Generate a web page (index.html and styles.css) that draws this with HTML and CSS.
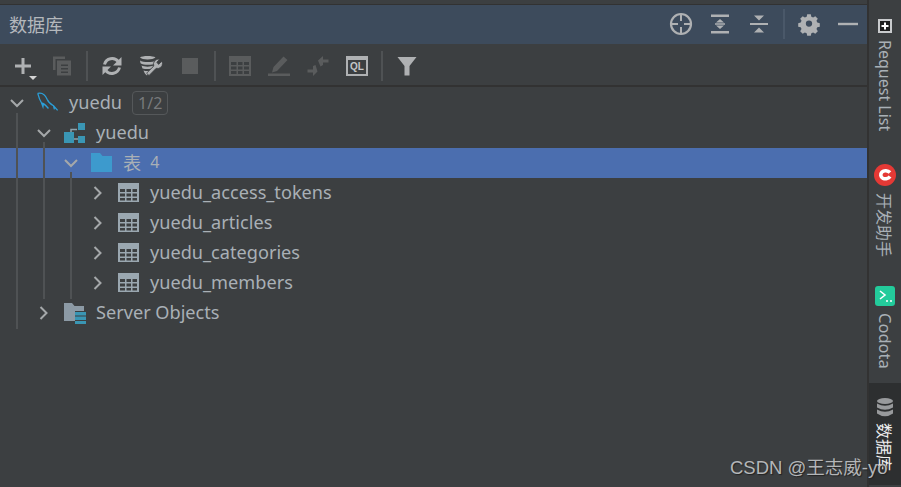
FILE: index.html
```html
<!DOCTYPE html>
<html lang="zh">
<head>
<meta charset="utf-8">
<title>数据库</title>
<link rel="stylesheet" href="styles.css">
</head>
<body>
<div class="app">
  <main class="panel">
    <div class="topstrip"></div>
    <header class="titlebar">
      <span class="title">数据库</span>
      <div class="titleicons">
        <svg class="ic" viewBox="0 0 24 24"><circle cx="12" cy="12" r="10" fill="none" stroke="#afb1b3" stroke-width="2.200"/><path d="M12 2v7M12 15v7M2 12h7M15 12h7" stroke="#afb1b3" stroke-width="2"/></svg>
        <svg class="ic" viewBox="0 0 24 24"><path d="M3 2.500h18v2.500H3zM3 19h18v2.500H3zM12 7l4 3.600H8zM12 17l-4-3.600h8zM7 11.200h10v1.600H7z" fill="#afb1b3"/></svg>
        <svg class="ic" viewBox="0 0 24 24"><path d="M3 11h18v2H3zM7 3.500h10l-5 5zM12 15.500l5 5H7z" fill="#afb1b3"/></svg>
        <span class="vsep dark"></span>
        <svg class="ic" viewBox="0 0 24 24"><path fill="#afb1b3" fill-rule="evenodd" d="M10 1.500h4l.6 2.800 2 .9 2.400-1.500 2.800 2.800-1.500 2.400.9 2 2.800.6v4l-2.800.6-.9 2 1.500 2.400-2.800 2.800-2.400-1.500-2 .9-.6 2.800h-4l-.6-2.800-2-.9-2.400 1.500-2.800-2.800 1.500-2.400-.9-2-2.800-.6v-4l2.800-.6.9-2-1.500-2.400 2.800-2.800 2.400 1.500 2-.9zM12 8.500a3.500 3.500 0 1 0 0 7 3.500 3.500 0 0 0 0-7z" transform="translate(1.200 .8) scale(.9)"/></svg>
        <svg class="ic" viewBox="0 0 24 24"><path d="M2 10.800h20v2.400H2z" fill="#afb1b3"/></svg>
      </div>
    </header>
    <nav class="toolbar">
      <span class="tool add">
        <svg viewBox="0 0 22 22"><path d="M9.500 3h3v6.500H19v3h-6.500V19h-3v-6.500H3v-3h6.500z" fill="#afb1b3"/></svg>
        <i class="caret"></i>
      </span>
      <svg class="tool" viewBox="0 0 22 22"><path d="M2 1.500h12v2.500H4.500V15H2z" fill="#5a5c5d"/><path fill="#5a5c5d" fill-rule="evenodd" d="M6 5.500h14v15H6zM10 9.500V11h7V9.500zm0 3.500v1.500h7V13zm0 3.500V18h7v-1.500z"/></svg>
      <span class="vsep"></span>
      <svg class="tool" viewBox="0 0 22 22"><path d="M3.500 9.500a7.800 7.800 0 0 1 13.800-2.800" fill="none" stroke="#afb1b3" stroke-width="3"/><path d="M20.500 2v8.500H12z" fill="#afb1b3"/><path d="M18.500 12.500a7.800 7.800 0 0 1-13.800 2.800" fill="none" stroke="#afb1b3" stroke-width="3"/><path d="M1.500 20v-8.500H10z" fill="#afb1b3"/></svg>
      <svg class="tool wide" viewBox="0 0 24 22"><path d="M1 2.500C3 .5 14 .5 16.500 2.500 14 5 3 5 1 2.500zM1 5.500c3 2 13 2 16 0l-.5 2.800c-3 2-12 2-15 0zM2.500 10.500c3 1.500 9 1.500 12 0l-2 3c-2.500.8-6 .8-9 0zM4.500 15.500c2 .7 4 .8 6 .3L8 20.500c-1-.3-3-3-3.500-5z" fill="#afb1b3"/><path d="M23.500 8.500a5 5 0 0 1-6.300 4.800L10 20.500 7.600 18.200l7.200-7.200A5 5 0 0 1 20.700 4.300L17.800 7.200l1.800 2.200 2.900-2.900c.6.600 1 1.300 1 2z" fill="#afb1b3" stroke="#3c3f41" stroke-width=".8"/></svg>
      <svg class="tool" viewBox="0 0 22 22"><rect x="3" y="3" width="16" height="16" fill="#5a5c5d"/></svg>
      <span class="vsep"></span>
      <svg class="tool" viewBox="0 0 22 22"><path fill="#5a5c5d" fill-rule="evenodd" d="M0 1h22v20H0zM2 7v3h5.500V7zm7 0v3h4.500V7zm6 0v3h5V7zM2 11.500v3h5.500v-3zm7 0v3h4.500v-3zm6 0v3h5v-3zM2 16v3h5.500v-3zm7 0v3h4.500v-3zm6 0v3h5v-3z"/></svg>
      <svg class="tool" viewBox="0 0 22 22"><path d="M15.500 1.500l4 3.500L9 16l-5 1.500L5.500 12zM0 18.500h22V21H0z" fill="#5a5c5d"/></svg>
      <svg class="tool" viewBox="0 0 22 22"><path d="M11 5.500L16 1v3.500h5.500v3H16V10l-2.500 1.500zM10.500 16.500L6 21v-3.500H.5v-3H6V11l2.500-1z" fill="#5a5c5d"/></svg>
      <span class="tool ql"><b>QL</b></span>
      <span class="vsep"></span>
      <svg class="tool" viewBox="0 0 22 22"><path d="M1.500 2h19L13.500 11v9.500h-5V11z" fill="#afb1b3"/></svg>
    </nav>
    <div class="tree">
      <i class="guide g0"></i>
      <i class="guide g1"></i>
      <i class="guide g2"></i>

      <div class="row">
        <svg class="chev" viewBox="0 0 14 14"><path d="M1 4l6 6 6-6" class="cp"/></svg>
        <svg class="nodeicon" viewBox="0 0 24 24"><path d="M.8 1.500C5 .5 9 3 11 8c1.500 3.500 4 5.500 7 7l4.500 5M.8 1.500C2 6 3 9 5 12l1.500 4 .5-3M5 12c3 .5 5 3 7.500 6M18 15l1 4" fill="none" stroke="#2b9fd8" stroke-width="1.400"/></svg>
        <span class="name">yuedu</span>
        <span class="badge">1/2</span>
      </div>

      <div class="row l1">
        <svg class="chev" viewBox="0 0 14 14"><path d="M1 4l6 6 6-6" class="cp"/></svg>
        <svg class="nodeicon" viewBox="0 0 22 22"><path d="M7 14V7.500h6" fill="none" stroke="#8fa3ad" stroke-width="1.500"/><path d="M14 1h7v7h-7zM0 10h10v11H0zM14 14h7v7h-7z" fill="#3a96b4"/><path d="M10 17h4" stroke="#8fa3ad" stroke-width="1.500"/></svg>
        <span class="name">yuedu</span>
      </div>

      <div class="row l2 selected">
        <svg class="chev" viewBox="0 0 14 14"><path d="M1 4l6 6 6-6" class="cp"/></svg>
        <svg class="nodeicon" viewBox="0 0 22 22"><path d="M0 1h9l2.500 3H21v16H0z" fill="#3d9acd"/></svg>
        <span class="name">表</span>
        <span class="count">4</span>
      </div>

      <div class="row l3">
        <svg class="chev" viewBox="0 0 14 14"><path d="M3.500 1l6 6-6 6" class="cp"/></svg>
        <svg class="nodeicon" viewBox="0 0 22 22"><use href="#tbl"/></svg>
        <span class="name">yuedu_access_tokens</span>
      </div>
      <div class="row l3">
        <svg class="chev" viewBox="0 0 14 14"><path d="M3.500 1l6 6-6 6" class="cp"/></svg>
        <svg class="nodeicon" viewBox="0 0 22 22"><use href="#tbl"/></svg>
        <span class="name">yuedu_articles</span>
      </div>
      <div class="row l3">
        <svg class="chev" viewBox="0 0 14 14"><path d="M3.500 1l6 6-6 6" class="cp"/></svg>
        <svg class="nodeicon" viewBox="0 0 22 22"><use href="#tbl"/></svg>
        <span class="name">yuedu_categories</span>
      </div>
      <div class="row l3">
        <svg class="chev" viewBox="0 0 14 14"><path d="M3.500 1l6 6-6 6" class="cp"/></svg>
        <svg class="nodeicon" viewBox="0 0 22 22"><use href="#tbl"/></svg>
        <span class="name">yuedu_members</span>
      </div>

      <div class="row l1">
        <svg class="chev" viewBox="0 0 14 14"><path d="M3.500 1l6 6-6 6" class="cp"/></svg>
        <svg class="nodeicon" viewBox="0 0 22 22"><path d="M0 1h8l2.500 3H20v5h-9v10H0z" fill="#8c9aa5"/><path d="M11 10h11v3.500H11zM11 14.500h11V18H11zM11 19h11v3H11z" fill="#3a96b4"/></svg>
        <span class="name">Server Objects</span>
      </div>
    </div>
  </main>

  <aside class="sidebar">
    <div class="stab t-req">
      <span class="sq"><svg viewBox="0 0 14 14"><rect width="14" height="14" fill="#c9cbcd"/><rect x="2" y="2" width="10" height="10" fill="#1e1e1e"/><path d="M6 3.500h2V6h2.500v2H8v2.500H6V8H3.500V6H6z" fill="#fff"/></svg></span>
      <span class="vtext">Request List</span>
    </div>
    <div class="stab t-dev">
      <span class="sq big"><svg viewBox="0 0 22 22"><circle cx="11" cy="11" r="11" fill="#e53935"/><path d="M16 8.500C14 6.500 10 6 8 8c-2 2-1.500 5 1 6.300 2.500 1 5.500.4 7-1.800" fill="none" stroke="#fff" stroke-width="3.600"/></svg></span>
      <span class="vtext">开发助手</span>
    </div>
    <div class="stab t-cod">
      <span class="sq big cod"><svg viewBox="0 0 20 20"><rect width="20" height="20" rx="3" fill="#23cb9b"/><path d="M5 5l5 4-5 4" fill="none" stroke="#fff" stroke-width="1.600"/><path d="M11 15h2M15 15h2" stroke="#fff" stroke-width="1.600"/></svg></span>
      <span class="vtext">Codota</span>
    </div>
    <div class="stab t-db">
      <span class="sq cyl"><svg viewBox="0 0 16 19"><ellipse cx="8" cy="3" rx="8" ry="3" fill="#989a9c"/><path d="M0 5.500Q8 10 16 5.500V9.500Q8 14 0 9.500zM0 11.500Q8 16 16 11.500V15.500Q8 21 0 15.500z" fill="#989a9c"/></svg></span>
      <span class="vtext">数据库</span>
    </div>
  </aside>
</div>
<div class="watermark">CSDN @王志威-yo</div>
<svg class="defs" aria-hidden="true"><defs><g id="tbl"><path fill="#9aa7b0" fill-rule="evenodd" d="M0 1h21v19H0zM2 7v3h5v-3zm6.500 0v3h4.500v-3zm6 0v3H19v-3zM2 11.500v3h5v-3zm6.500 0v3h4.500v-3zm6 0v3H19v-3zM2 16v2.500h5V16zm6.500 0v2.500h4.500V16zm6 0v2.500H19V16z"/></g></defs></svg>
</body>
</html>
```

FILE: styles.css
```css
* { box-sizing: border-box; }
html, body { margin: 0; height: 100%; overflow: hidden; }
body {
  position: relative;
  background: #3c3f41;
  color: #bbbbbb;
  font-family: "Noto Sans", "Noto Sans CJK SC", sans-serif;
}
.app { display: flex; height: 487px; width: 901px; }
.panel { flex: 1; display: flex; flex-direction: column; min-width: 0; }
.topstrip { height: 5px; background: #3c3f41; border-bottom: 1px solid #323232; }
.titlebar {
  height: 39px;
  background: #3d4b5c;
  display: flex;
  align-items: center;
  justify-content: space-between;
  padding-left: 9px;
}
.title { font-size: 18px; color: #b4b8bc; font-family: "Noto Sans CJK SC", sans-serif; padding-bottom: 2px; }
.titleicons { display: flex; align-items: center; gap: 15px; padding-right: 7px; padding-bottom: 1px; }
.ic { width: 24px; height: 24px; display: block; flex: none; }
.vsep { width: 2px; height: 30px; background: #4f5254; display: block; flex: none; margin: 0 -4px; }
.vsep.dark { background: #4a5869; margin: 0 -3px; }
.toolbar {
  height: 43px;
  display: flex;
  align-items: center;
  padding: 2px 0 0 12px;
  gap: 17px;
  border-bottom: 2px solid #323232;
  background: #3c3f41;
}
.tool { width: 22px; height: 22px; display: block; flex: none; }
.tool.wide { width: 24px; margin: 0 -1px; }
.add { position: relative; }
.add svg { width: 22px; height: 22px; display: block; }
.caret {
  position: absolute;
  right: -3px;
  bottom: -3px;
  border: 4px solid transparent;
  border-top: 4px solid #d4d4d4;
  border-bottom: 0;
}
.ql {
  border: 2px solid #afb1b3;
  border-top-width: 4px;
  height: 20px;
  display: flex;
  align-items: center;
  justify-content: center;
}
.ql b {
  font: bold 10px "Liberation Sans", sans-serif;
  color: #c4c6c8;
}
.tree { position: relative; flex: 1; padding-top: 1px; }
.row {
  height: 30px;
  display: flex;
  align-items: center;
  padding-left: 10px;
  font-size: 18.15px;
  color: #a9b0b6;
}
.l1 { padding-left: 37px; }
.l2 { padding-left: 64px; }
.l3 { padding-left: 91px; }
.selected { background: #4b6eaf; }
.chev { width: 14px; height: 14px; flex: none; }
.cp { fill: none; stroke: #a5a8aa; stroke-width: 2; }
.nodeicon { width: 22px; height: 22px; margin-left: 13px; flex: none; }
.name { margin-left: 10px; white-space: nowrap; padding-bottom: 2px; }
.badge {
  margin-left: 10px;
  border: 1px solid #55585a;
  border-radius: 4px;
  font-size: 16px;
  line-height: 20px;
  height: 24px;
  padding: 1px 5px 0;
  color: #787a7c;
}
.count { margin-left: 9px; font-size: 16px; color: #a9b0b6; padding-bottom: 2px; }
.guide { position: absolute; width: 2px; background: #4f5254; display: block; }
.g0 { left: 16px; top: 26px; height: 216px; }
.g1 { left: 43px; top: 55px; height: 157px; }
.g2 { left: 70px; top: 85px; height: 127px; }
.sidebar {
  width: 34px;
  flex: none;
  display: flex;
  flex-direction: column;
  border-left: 2px solid #323232;
  background: #3c3f41;
}
.stab { display: flex; flex-direction: column; align-items: center; }
.sq { width: 14px; height: 14px; display: block; }
.sq svg { display: block; width: 100%; height: 100%; }
.sq.big { width: 22px; height: 22px; }
.sq.cod { width: 20px; height: 20px; }
.sq.cyl { width: 16px; height: 19px; }
.vtext {
  writing-mode: vertical-rl;
  text-orientation: sideways;
  font-size: 16px;
  line-height: 20px;
  color: #a9b0b6;
  margin-top: 7px;
  white-space: nowrap;
}
.t-req { padding-top: 19px; height: 164px; }
.t-req .vtext { margin-top: 7px; }
.t-dev { height: 122px; }
.t-cod { height: 97px; }
.t-cod .vtext { font-size: 16.5px; margin-top: 7px; }
.t-db { background: #2d2f30; padding-top: 15px; height: 102px; }
.t-db .vtext { color: #f0f0f0; margin-top: 6px; }
.t-dev .vtext, .t-db .vtext { font-family: "Noto Sans CJK SC", sans-serif; }
.watermark {
  position: absolute;
  left: 730px;
  top: 453px;
  font: 18.5px "Liberation Sans", "Noto Sans CJK SC", sans-serif;
  color: #b4b6b8;
  white-space: nowrap;
  text-shadow: 1px 1px 1px #222;
}
.defs { position: absolute; width: 0; height: 0; }
```
